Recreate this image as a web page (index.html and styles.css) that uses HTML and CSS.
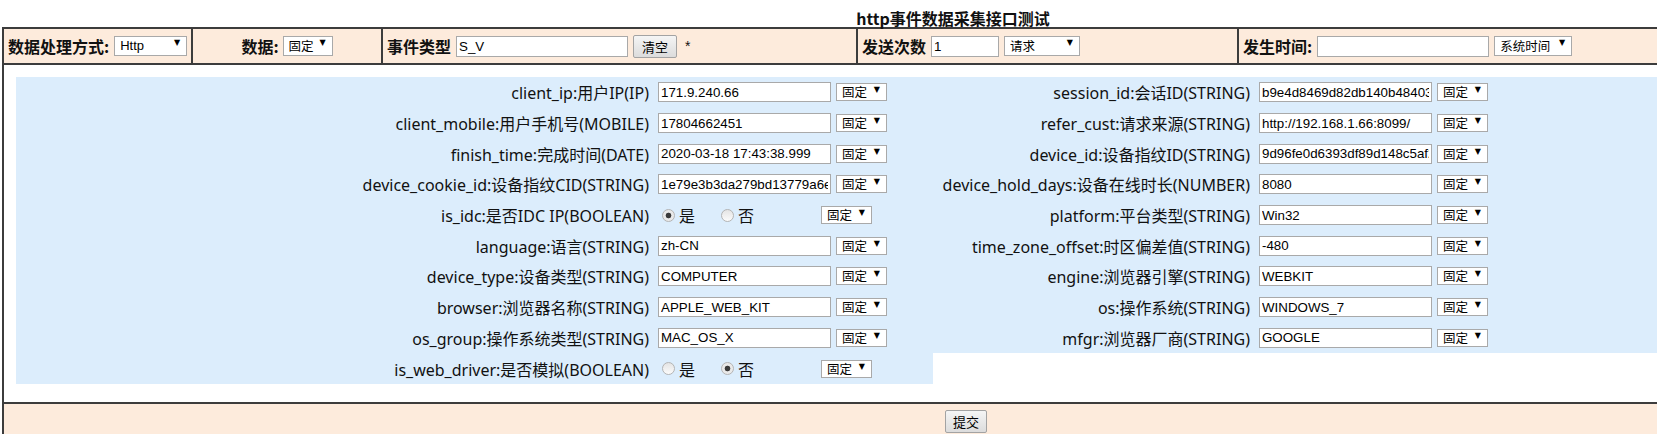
FILE: index.html
```html
<!DOCTYPE html>
<html lang="zh-CN">
<head>
    <meta charset="UTF-8">
    <meta name="viewport" content="width=device-width, initial-scale=1.0">
    <title>http事件数据采集接口测试</title>
    <link rel="stylesheet" href="styles.css">
</head>
<body>
    <div class="page">
        <div class="title">http事件数据采集接口测试</div>
        <div class="frame">
            <div class="head">
                <div class="cell">
                    <b>数据处理方式:</b>
                    <span class="sel"><select class="w-http"><option>Http</option></select></span>
                </div>
                <div class="cell center">
                    <b>数据:</b>
                    <span class="sel"><select class="w-fix"><option>固定</option></select></span>
                </div>
                <div class="cell">
                    <b>事件类型</b>
                    <input type="text" class="w-long" value="S_V">
                    <button class="btn">清空</button>
                    <span class="star">*</span>
                </div>
                <div class="cell">
                    <b>发送次数</b>
                    <input type="text" class="w-num" value="1">
                    <span class="sel"><select class="w-req"><option>请求</option></select></span>
                </div>
                <div class="cell last">
                    <b>发生时间:</b>
                    <input type="text" class="w-long" value="">
                    <span class="sel"><select class="w-time"><option>系统时间</option></select></span>
                </div>
            </div>

            <div class="body">
                <div class="panel left">
                    <div class="row"><span class="lbl">client_ip:用户IP(IP)</span><input type="text" value="171.9.240.66"><span class="sel"><select><option>固定</option></select></span></div>
                    <div class="row"><span class="lbl">client_mobile:用户手机号(MOBILE)</span><input type="text" value="17804662451"><span class="sel"><select><option>固定</option></select></span></div>
                    <div class="row"><span class="lbl">finish_time:完成时间(DATE)</span><input type="text" value="2020-03-18 17:43:38.999"><span class="sel"><select><option>固定</option></select></span></div>
                    <div class="row"><span class="lbl">device_cookie_id:设备指纹CID(STRING)</span><input type="text" value="1e79e3b3da279bd13779a6e0c2"><span class="sel"><select><option>固定</option></select></span></div>
                    <div class="row">
                        <span class="lbl">is_idc:是否IDC IP(BOOLEAN)</span>
                        <span class="radios">
                            <label><input type="radio" name="is_idc" checked>是</label>
                            <label><input type="radio" name="is_idc">否</label>
                        </span>
                        <span class="sel"><select><option>固定</option></select></span>
                    </div>
                    <div class="row"><span class="lbl">language:语言(STRING)</span><input type="text" value="zh-CN"><span class="sel"><select><option>固定</option></select></span></div>
                    <div class="row"><span class="lbl">device_type:设备类型(STRING)</span><input type="text" value="COMPUTER"><span class="sel"><select><option>固定</option></select></span></div>
                    <div class="row"><span class="lbl">browser:浏览器名称(STRING)</span><input type="text" value="APPLE_WEB_KIT"><span class="sel"><select><option>固定</option></select></span></div>
                    <div class="row"><span class="lbl">os_group:操作系统类型(STRING)</span><input type="text" value="MAC_OS_X"><span class="sel"><select><option>固定</option></select></span></div>
                    <div class="row">
                        <span class="lbl">is_web_driver:是否模拟(BOOLEAN)</span>
                        <span class="radios">
                            <label><input type="radio" name="is_wd">是</label>
                            <label><input type="radio" name="is_wd" checked>否</label>
                        </span>
                        <span class="sel"><select><option>固定</option></select></span>
                    </div>
                </div>

                <div class="panel right">
                    <div class="row"><span class="lbl">session_id:会话ID(STRING)</span><input type="text" value="b9e4d8469d82db140b484038f1"><span class="sel"><select><option>固定</option></select></span></div>
                    <div class="row"><span class="lbl">refer_cust:请求来源(STRING)</span><input type="text" value="http://192.168.1.66:8099/"><span class="sel"><select><option>固定</option></select></span></div>
                    <div class="row"><span class="lbl">device_id:设备指纹ID(STRING)</span><input type="text" value="9d96fe0d6393df89d148c5af2e1"><span class="sel"><select><option>固定</option></select></span></div>
                    <div class="row"><span class="lbl">device_hold_days:设备在线时长(NUMBER)</span><input type="text" value="8080"><span class="sel"><select><option>固定</option></select></span></div>
                    <div class="row"><span class="lbl">platform:平台类型(STRING)</span><input type="text" value="Win32"><span class="sel"><select><option>固定</option></select></span></div>
                    <div class="row"><span class="lbl">time_zone_offset:时区偏差值(STRING)</span><input type="text" value="-480"><span class="sel"><select><option>固定</option></select></span></div>
                    <div class="row"><span class="lbl">engine:浏览器引擎(STRING)</span><input type="text" value="WEBKIT"><span class="sel"><select><option>固定</option></select></span></div>
                    <div class="row"><span class="lbl">os:操作系统(STRING)</span><input type="text" value="WINDOWS_7"><span class="sel"><select><option>固定</option></select></span></div>
                    <div class="row"><span class="lbl">mfgr:浏览器厂商(STRING)</span><input type="text" value="GOOGLE"><span class="sel"><select><option>固定</option></select></span></div>
                </div>
            </div>

            <div class="foot">
                <button class="btn">提交</button>
            </div>
        </div>
    </div>
</body>
</html>
```

FILE: styles.css
```css
html {
    overflow: hidden;
}

body {
    margin: 0;
    font-family: "Noto Sans", "Noto Sans CJK SC", sans-serif;
    color: #111;
    background-color: #fff;
}

.page {
    width: 1902px;
    padding-left: 2px;
}

.title {
    height: 27px;
    padding-top: 8px;
    box-sizing: border-box;
    text-align: center;
    font-family: "Noto Sans CJK SC", sans-serif;
    font-size: 16px;
    font-weight: bold;
    line-height: 20px;
}

.frame {
    border: 2px solid #3c3c3c;
    border-bottom: none;
}

/* header row */
.head {
    display: grid;
    grid-template-columns: 189px 190px 475px 381px 1fr;
    height: 34px;
    border-bottom: 2px solid #3c3c3c;
    background-color: #fdebdc;
}

.cell {
    display: flex;
    align-items: center;
    gap: 5px;
    padding: 0 4px;
    overflow: hidden;
    white-space: nowrap;
    border-right: 2px solid #3c3c3c;
    font-family: "Noto Sans CJK SC", sans-serif;
    font-size: 16px;
}

.cell b {
    flex: none;
}

.cell.center {
    justify-content: center;
    gap: 4px;
}

.cell.last {
    border-right: none;
}

.star {
    margin-left: 3px;
    font-family: "Liberation Sans", sans-serif;
    font-size: 14px;
}

/* form controls */
input[type="text"] {
    width: 173px;
    height: 20px;
    box-sizing: border-box;
    margin: 0 5px 0 0;
    padding: 1px 2px;
    border: 1px solid #a9a9a9;
    background-color: #fff;
    font-family: "Liberation Sans", sans-serif;
    font-size: 13.33px;
    color: #000;
}

.cell input[type="text"] {
    height: 21px;
    margin: 0;
}

.w-long {
    width: 172px !important;
}

.w-num {
    width: 68px !important;
}

.sel {
    position: relative;
    display: inline-block;
    flex: none;
    line-height: 0;
}

.sel::after {
    content: "▼";
    position: absolute;
    right: 7px;
    top: 3px;
    font-family: "DejaVu Sans", sans-serif;
    font-size: 8px;
    line-height: 8px;
    color: #000;
    pointer-events: none;
}

select {
    appearance: none;
    -webkit-appearance: none;
    width: 51px;
    height: 18px;
    margin: 0;
    padding: 0 0 0 5px;
    border: 1px solid #a9a9a9;
    border-radius: 0;
    background-color: #fff;
    font-family: "Noto Sans CJK SC", sans-serif;
    font-size: 12.5px;
    line-height: 16px;
    color: #000;
}

.head select {
    height: 20px;
}

.w-http {
    width: 73px;
    font-family: "Liberation Sans", sans-serif;
    font-size: 13px;
}

.w-fix {
    width: 50px;
}

.w-req {
    width: 76px;
}

.w-time {
    width: 78px;
}

.btn {
    flex: none;
    height: 23px;
    padding: 0 8px;
    border: 1px solid #a3a3a3;
    border-radius: 2px;
    background: linear-gradient(#f5f5f5, #dcdcdc);
    font-family: "Noto Sans CJK SC", sans-serif;
    font-size: 13px;
    color: #000;
    cursor: pointer;
}

/* body with two blue panels */
.body {
    display: flex;
    align-items: flex-start;
    height: 337px;
    box-sizing: border-box;
    padding: 12px 0 0 12px;
}

.panel {
    width: 917px;
    background-color: #dcedfc;
}

.row {
    display: flex;
    align-items: center;
    height: 30.7px;
}

.lbl {
    flex: none;
    margin-right: 9px;
    text-align: right;
    white-space: nowrap;
    font-size: 16px;
    color: #111;
}

.left .lbl {
    width: 633px;
}

.right .lbl {
    width: 317px;
}

.radios {
    display: flex;
    align-items: center;
    width: 163px;
    padding-left: 4px;
    box-sizing: border-box;
    font-family: "Noto Sans CJK SC", sans-serif;
    font-size: 16px;
}

.radios label {
    display: flex;
    align-items: center;
    gap: 4px;
    margin-right: 26px;
}

input[type="radio"] {
    appearance: none;
    -webkit-appearance: none;
    width: 13px;
    height: 13px;
    margin: 0;
    border: 1px solid #b4b4b4;
    border-radius: 50%;
    background: linear-gradient(#e4e4e4, #fbfbfb);
}

input[type="radio"]:checked {
    background: radial-gradient(circle, #3a3a3a 0 2.5px, #e9e9e9 3.2px);
}

/* footer */
.foot {
    height: 40px;
    box-sizing: border-box;
    padding: 6px 0 0 26px;
    border-top: 2px solid #3c3c3c;
    background-color: #fdebdc;
    text-align: center;
}

.foot .btn {
    width: 42px;
    padding: 0;
}
```
